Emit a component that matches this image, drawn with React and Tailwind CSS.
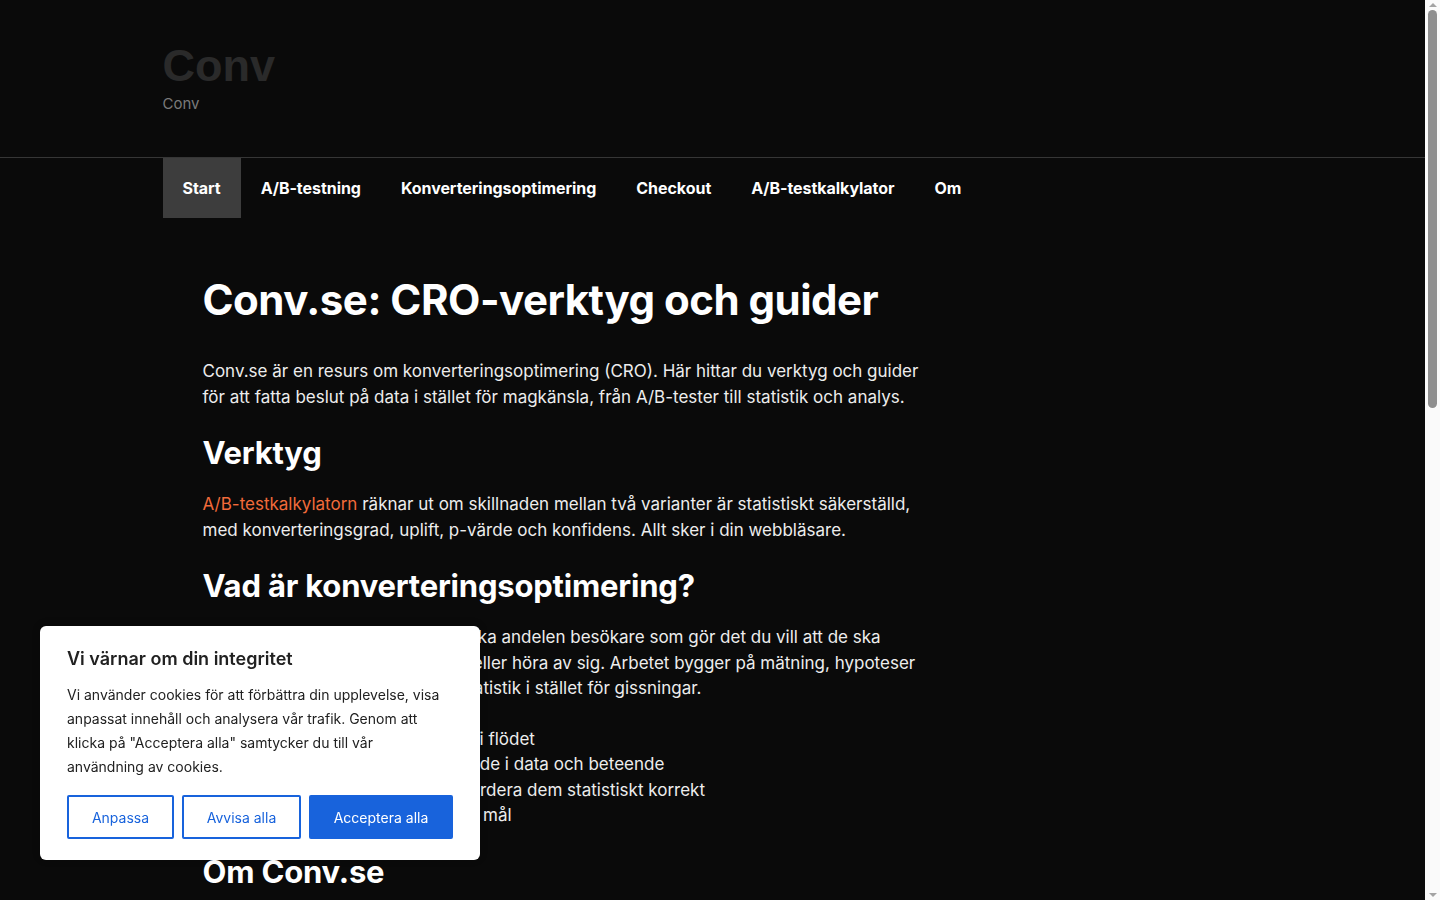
import React from "react";

const nav = ["Start", "A/B-testning", "Konverteringsoptimering", "Checkout", "A/B-testkalkylator", "Om"];

const P = ({ children, className = "" }) => (
  <p className={`mt-[19px] text-[17px] leading-[25.5px] text-[#ededed] ${className}`}>{children}</p>
);
const H2 = ({ children }) => (
  <h2 className="mt-[23px] text-[31px] leading-[40px] font-bold tracking-[-0.2px] text-white">{children}</h2>
);

export default function App() {
  return (
    <div className="min-h-screen bg-[#0a0a0a] text-[#f2f2f2] pr-[15px]" style={{ fontFamily: "Inter, 'Noto Sans', sans-serif" }}>
      <header className="border-b border-[#363636]">
        <div className="mx-auto w-[1100px] pt-[42px] pb-[43px]">
          <div className="text-[45px] leading-[48px] font-bold text-[#2a2a2a]" style={{ fontFamily: "'Liberation Sans', Arial, sans-serif" }}>Conv</div>
          <div className="text-[15px] leading-[20px] text-[#7a7a7a] mt-[4px]">Conv</div>
        </div>
      </header>
      <nav className="mx-auto w-[1100px] flex">
        {nav.map((n, i) => (
          <a key={n} className={`px-[20px] h-[60px] flex items-center text-[16px] font-bold tracking-[-0.05px] text-white ${i === 0 ? "bg-[#3d3d3d]" : ""}`}>{n}</a>
        ))}
      </nav>
      <main className="mx-auto w-[1100px] px-[40px] pt-[56px] pb-[120px]">
        <div className="max-w-[720px]">
          <h1 className="text-[42px] leading-[52px] font-bold tracking-[-0.5px] text-white">Conv.se: CRO-verktyg och guider</h1>
          <P className="!mt-[33px]">
            Conv.se är en resurs om konverteringsoptimering (CRO). Här hittar du verktyg och guider för att fatta beslut på data i stället för magkänsla, från A/B-tester till statistik och analys.
          </P>
          <H2>Verktyg</H2>
          <P>
            <a className="text-[#f26b3a]">A/B-testkalkylatorn</a> räknar ut om skillnaden mellan två varianter är statistiskt säkerställd, med konverteringsgrad, uplift, p-värde och konfidens. Allt sker i din webbläsare.
          </P>
          <H2>Vad är konverteringsoptimering?</H2>
          <P>
            Målet med CRO är att strategiskt öka andelen besökare som gör det du vill att de ska göra, exempelvis köpa, ladda ner eller höra av sig. Arbetet bygger på mätning, hypoteser och kontrollerade A/B-test med statistik i stället för gissningar.
          </P>
          <ul className="mt-[25px] list-disc pl-[26px] text-[17px] leading-[25.5px] text-[#ededed]">
            <li>Hitta var dina besökare fastnar i flödet</li>
            <li>Formulera hypoteser välgrundade i data och beteende</li>
            <li>Testa förändringarna samt utvärdera dem statistiskt korrekt</li>
            <li>Prioritera det som påverkar era mål</li>
          </ul>
          <H2>Om Conv.se</H2>
          <P>
            Conv.se drivs av personer som arbetar med analys, experiment och konverteringsoptimering. Målet är att göra statistik och testning begriplig och användbar för alla som arbetar med webbplatser och e-handel.
          </P>
          <H2>Guider</H2>
          <P>
            Läs våra guider om A/B-testning, checkout-optimering och hur du tolkar resultat från dina experiment. Varje guide förklarar begreppen steg för steg med konkreta exempel.
          </P>
          <ul className="mt-[25px] list-disc pl-[26px] text-[17px] leading-[25.5px] text-[#ededed]">
            <li><a className="text-[#f26b3a]">A/B-testning</a>: så planerar och genomför du ett test</li>
            <li><a className="text-[#f26b3a]">Konverteringsoptimering</a>: arbetssätt och metoder</li>
            <li><a className="text-[#f26b3a]">Checkout</a>: minska avhopp i kassan</li>
          </ul>
          <H2>Kom igång</H2>
          <P>
            Börja med att mäta hur besökarna rör sig på din webbplats. Identifiera de steg där flest lämnar, formulera en hypotes och testa en förändring i taget. Använd kalkylatorn för att avgöra när resultatet är tillförlitligt.
          </P>
          <P>
            Har du frågor eller förslag på innehåll är du välkommen att höra av dig via sidan Om.
          </P>
        </div>
      </main>
      <footer className="border-t border-[#363636]">
        <div className="mx-auto w-[1100px] px-[40px] py-[40px] text-[14px] text-[#7a7a7a]">© 2025 Conv.se</div>
      </footer>

      <div className="fixed right-0 top-0 h-screen w-[15px] bg-[#fafafa] flex flex-col items-center">
        <div className="h-[10px] flex items-center justify-center">
          <div className="w-0 h-0 border-l-[4px] border-r-[4px] border-b-[4px] border-l-transparent border-r-transparent border-b-[#a3a3a3]" />
        </div>
        <div className="w-[9px] h-[398px] rounded-full bg-[#8f8f8f]" />
        <div className="flex-1" />
        <div className="h-[10px] flex items-center justify-center">
          <div className="w-0 h-0 border-l-[4px] border-r-[4px] border-t-[4px] border-l-transparent border-r-transparent border-t-[#a3a3a3]" />
        </div>
      </div>

      <div className="fixed left-[40px] bottom-[40px] w-[440px] bg-white rounded-[6px] px-[27px] pt-[21px] pb-[21px] text-[#212121] shadow-[0_-1px_10px_rgba(0,0,0,0.1)]">
        <div className="text-[18px] leading-[24px] font-semibold text-[#212121]">Vi värnar om din integritet</div>
        <p className="mt-[12px] text-[14px] leading-[24px] text-[#212121]">
          Vi använder cookies för att förbättra din upplevelse, visa anpassat innehåll och analysera vår trafik. Genom att klicka på "Acceptera alla" samtycker du till vår användning av cookies.
        </p>
        <div className="mt-[16px] flex gap-[8px]">
          <button className="h-[44px] w-[107px] border-2 border-[#1863dc] rounded-[2px] text-[14px] text-[#1863dc] bg-white">Anpassa</button>
          <button className="h-[44px] w-[119px] border-2 border-[#1863dc] rounded-[2px] text-[14px] text-[#1863dc] bg-white">Avvisa alla</button>
          <button className="h-[44px] w-[144px] border-2 border-[#1863dc] rounded-[2px] text-[14px] text-white bg-[#1863dc]">Acceptera alla</button>
        </div>
      </div>
    </div>
  );
}
